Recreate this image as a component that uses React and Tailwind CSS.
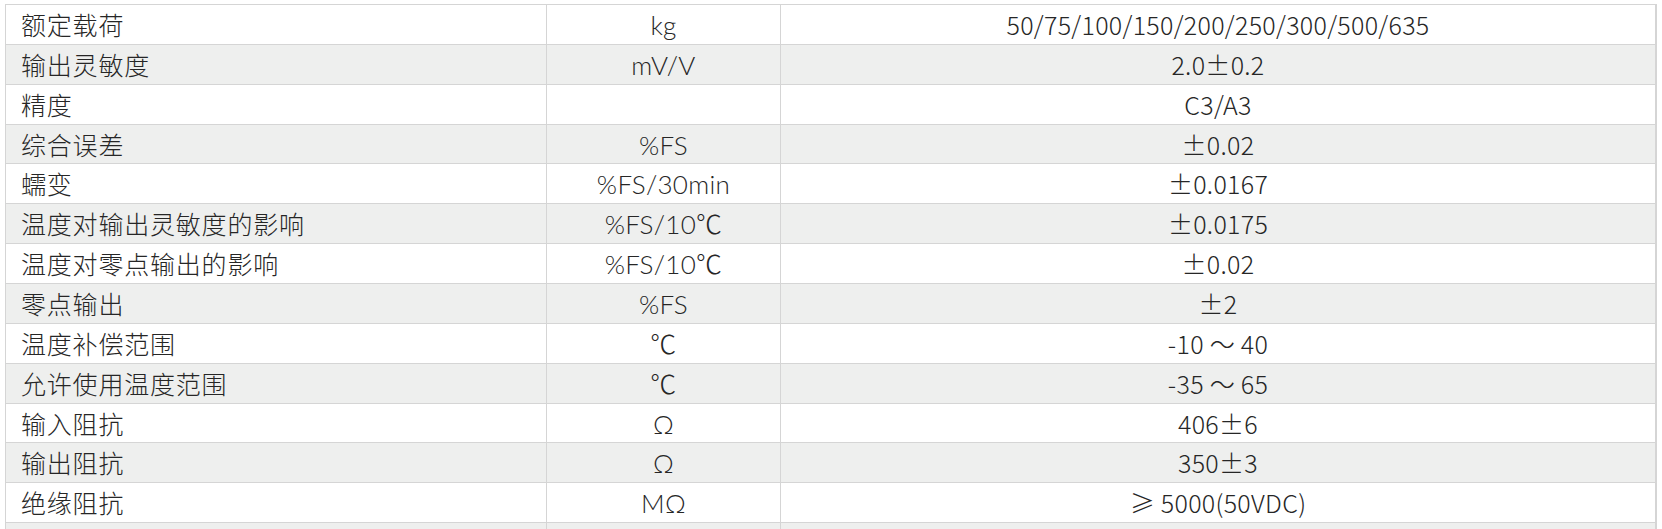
import React from 'react';

const ROWS = [
  ['额定载荷', 'kg', '50/75/100/150/200/250/300/500/635'],
  ['输出灵敏度', 'mV/V', '2.0±0.2'],
  ['精度', '', 'C3/A3'],
  ['综合误差', '%FS', '±0.02'],
  ['蠕变', '%FS/30min', '±0.0167'],
  ['温度对输出灵敏度的影响', '%FS/10℃', '±0.0175'],
  ['温度对零点输出的影响', '%FS/10℃', '±0.02'],
  ['零点输出', '%FS', '±2'],
  ['温度补偿范围', '℃', '-10 ～ 40'],
  ['允许使用温度范围', '℃', '-35 ～ 65'],
  ['输入阻抗', 'Ω', '406±6'],
  ['输出阻抗', 'Ω', '350±3'],
  ['绝缘阻抗', 'MΩ', '≥ 5000(50VDC)'],
  ['', '', ''],
];

export default function App() {
  return (
    <div className="min-h-screen bg-white pt-[4px] pl-[5px]">
      {/* spec table */}
      <div className="w-[1652px] border-t border-l border-r-2 border-[#d5d5d5] text-[25px] text-[#262626] font-light">
        {ROWS.map((row, i) => (
          <div
            key={i}
            className={`grid grid-cols-[541px_234px_874px] h-[39.87px] border-b border-[#d5d5d5] ${i % 2 === 1 ? 'bg-[#eeefee]' : 'bg-white'}`}
          >
            <div className="flex items-center pl-[15px] border-r border-[#d5d5d5] font-['Noto_Sans_CJK_SC',sans-serif] leading-none tracking-[0.8px] whitespace-nowrap">
              {row[0]}
            </div>
            <div className="flex items-center justify-center border-r border-[#d5d5d5] font-['Lato','Noto_Sans_CJK_SC',sans-serif] text-[26px] leading-none pt-[1px] tracking-[0.3px] whitespace-nowrap">
              {row[1]}
            </div>
            <div className="flex items-center justify-center font-['Noto_Sans_CJK_SC',sans-serif] leading-none tracking-[0.3px] whitespace-nowrap">
              {row[2]}
            </div>
          </div>
        ))}
      </div>
    </div>
  );
}
